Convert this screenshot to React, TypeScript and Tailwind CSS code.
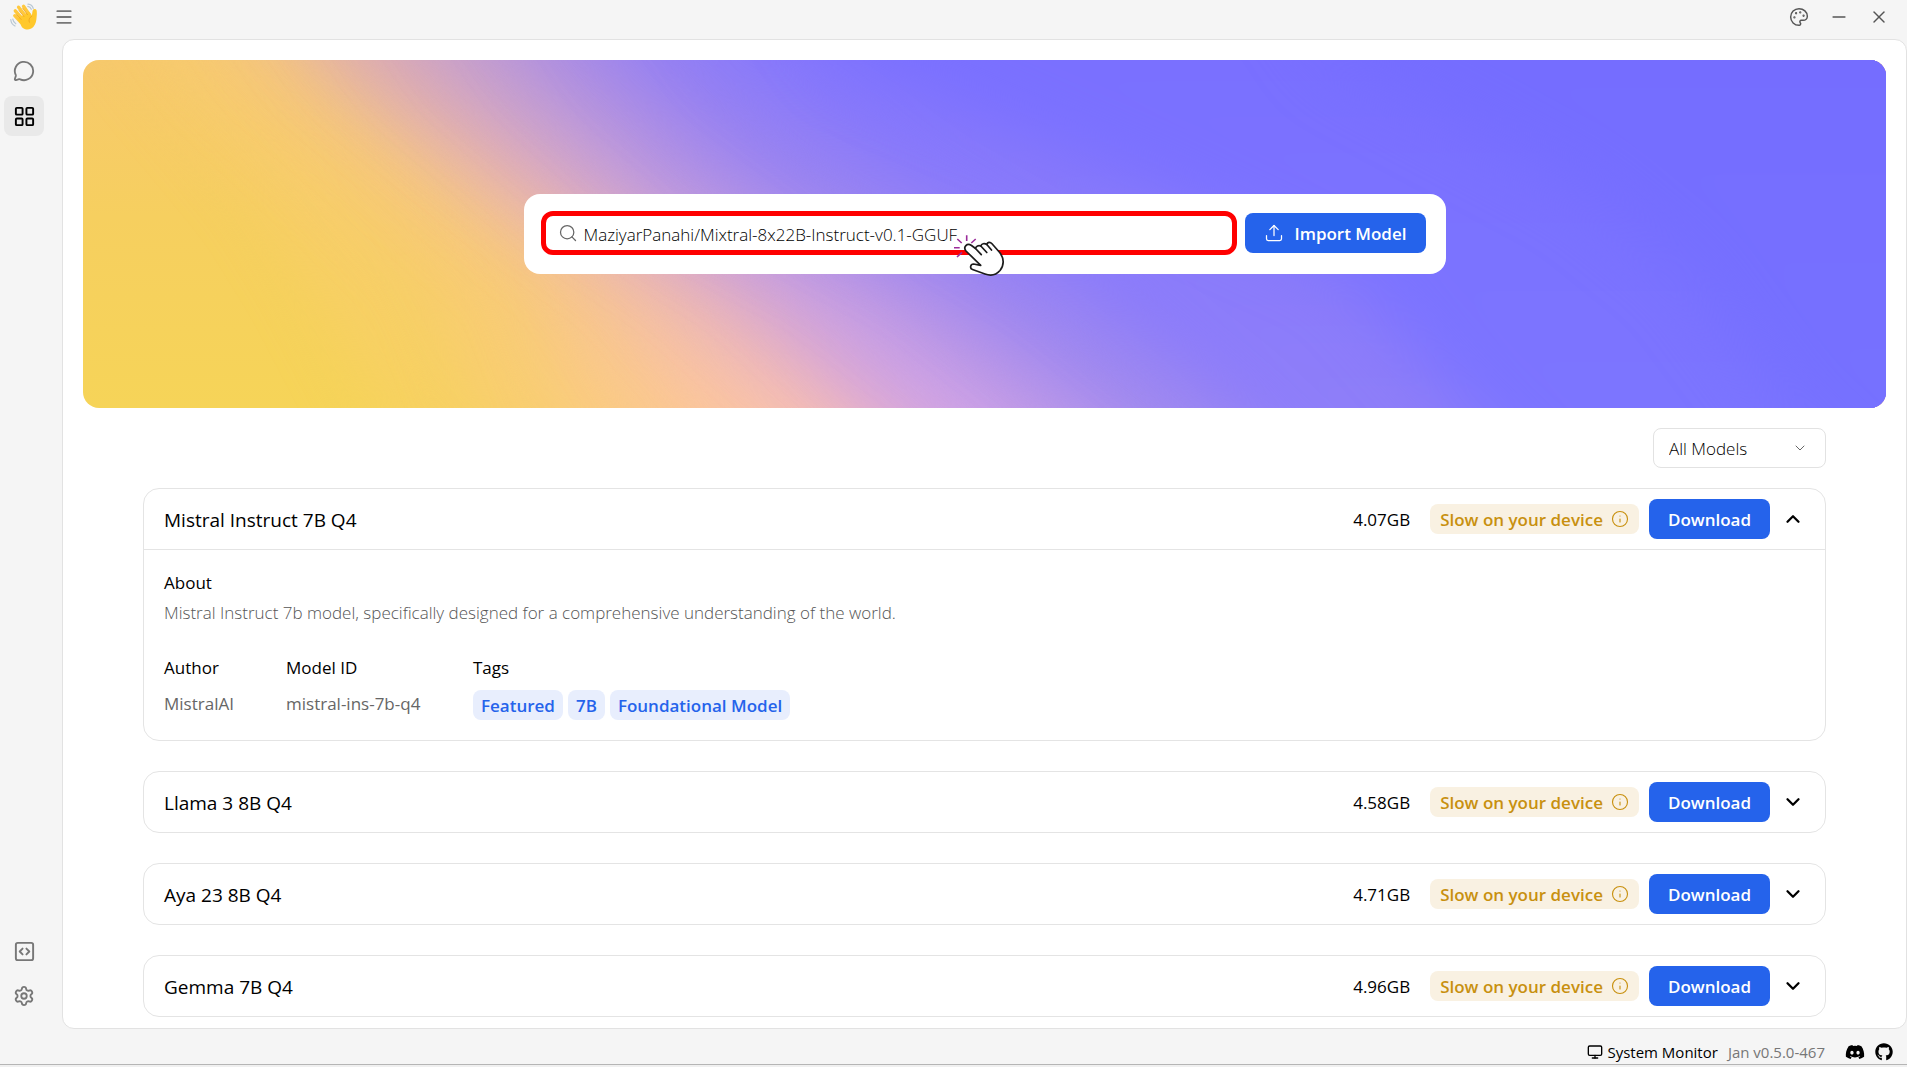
import React from "react";
import { ChevronDown, ChevronUp, Info, LayoutGrid, Menu, MessageCircle, Minus, Monitor, Palette, Search, Settings, SquareCode, Upload, X } from "lucide-react";
import { FaDiscord, FaGithub } from "react-icons/fa";

type Model = { name: string; size: string };

const models: Model[] = [
  { name: "Mistral Instruct 7B Q4", size: "4.07GB" },
  { name: "Llama 3 8B Q4", size: "4.58GB" },
  { name: "Aya 23 8B Q4", size: "4.71GB" },
  { name: "Gemma 7B Q4", size: "4.96GB" },
];

const tags = ["Featured", "7B", "Foundational Model"];

// Colour bands of the hero artwork: [top colour, bottom colour, left edge at y = 0, 133, 214, 348]
const bands: [string, string, number, number, number, number][] = [
  ["#f7cb6e", "#f7d162", 70, 180, 230, 300],
  ["#f6c778", "#f9ce72", 130, 270, 350, 400],
  ["#f0c08c", "#fbca88", 195, 350, 440, 490],
  ["#e6b6a2", "#fcc69e", 240, 400, 500, 580],
  ["#dcabb2", "#f6bfb4", 275, 440, 550, 665],
  ["#cda4c6", "#e2add0", 330, 485, 605, 755],
  ["#bd99d5", "#cfa3e6", 390, 545, 675, 815],
  ["#a88be6", "#b896e9", 460, 605, 755, 925],
  ["#927ff4", "#9f89f0", 545, 695, 845, 1020],
  ["#8577fc", "#8e7ef9", 650, 830, 970, 1140],
  ["#7a70ff", "#7c75ff", 760, 1080, 1260, 1380],
  ["#756dff", "#7671ff", 1250, 1500, 1600, 1700],
];

function HeroArt() {
  return (
    <svg className="absolute inset-0 h-full w-full" viewBox="0 0 1803 348" preserveAspectRatio="none" aria-hidden="true">
      <defs>
        <filter id="soft" x="-20%" y="-60%" width="140%" height="220%" colorInterpolationFilters="sRGB">
          <feGaussianBlur stdDeviation="30" />
        </filter>
        <linearGradient id="base" x1="0" y1="0" x2="0" y2="1">
          <stop offset="0" stopColor="#f7c96c" />
          <stop offset="0.45" stopColor="#f6cf5f" />
          <stop offset="1" stopColor="#f6d458" />
        </linearGradient>
        {bands.map(([top, bottom], i) => (
          <linearGradient key={i} id={`band${i}`} gradientUnits="userSpaceOnUse" x1="0" y1="0" x2="0" y2="348">
            <stop offset="0" stopColor={top} />
            <stop offset="1" stopColor={bottom} />
          </linearGradient>
        ))}
      </defs>
      <rect width="1803" height="348" fill="url(#base)" />
      {bands.map(([, , a, b, c, d], i) => (
        <path
          key={i}
          filter="url(#soft)"
          fill={`url(#band${i})`}
          d={`M${a - 80} -120L${a} 0L${b} 133L${c} 214L${d} 348L${d + 130} 470H2100V-120Z`}
        />
      ))}
    </svg>
  );
}

function WavingHand() {
  return (
    <svg width="28" height="28" viewBox="0 0 28 28" aria-hidden="true">
      <g fill="none" stroke="#b9c7d3" strokeWidth="1.2" strokeLinecap="round">
        <path d="M18 1.2c2.500.2 4.500 1.800 5.300 4.300M17.800 3.400c1.700.3 2.900 1.300 3.500 2.900" />
        <path d="M.8 16.500c.2 3 1.700 5.300 4.200 6.500M2.800 16.200c.3 2 1.300 3.600 3 4.600" />
      </g>
      <g stroke="#ffc83d" strokeLinecap="round" strokeWidth="3.400" fill="none">
        <path d="M4.800 12.700l6 6.300" />
        <path d="M5.300 7.800l8 9" />
        <path d="M8.600 4.200l8 10" />
        <path d="M13.500 3.300l6.500 9.500" />
      </g>
      <path fill="#ffc82c" d="M7.500 15.500L19 8.800c1.500 1.300 2.200 2.600 2.800 4.300.5-2.500.4-4.500 1.100-6 .8-1.600 3.500-1.400 3.800.7.3 2.500.2 4-.1 6.500-.3 3.500-.7 6.800-3.100 9.500-3.300 3.600-8.200 3.600-11.500.4z" />
      <path d="M6.600 11.700l4.600 4.800M9 7.600l5 6M12.700 5.300l4.800 6.400" fill="none" stroke="#eb9f1c" strokeWidth=".7" strokeLinecap="round" />
      <path d="M21.800 13.200c-2.500 1.300-3.400 3.700-2.400 6" fill="none" stroke="#eb9f1c" strokeWidth=".8" strokeLinecap="round" />
    </svg>
  );
}

function ClickPointer() {
  return (
    <svg className="pointer-events-none absolute left-[430px] top-[41px]" width="52" height="44" viewBox="0 0 52 44" aria-hidden="true">
      <path d="M12.700.3V6M17.300 8l4.400-4M3.300 4l4.400 4M0 12.700h5.700M3 22l5-4.700" stroke="#9b2c9b" strokeWidth="1.600" fill="none" />
      <g stroke="#1c1c1c" strokeWidth="1.700" strokeLinejoin="round" strokeLinecap="round">
        <path
          fill="#fff"
          d="M12 16L26.700 30.300L19.500 29C16.300 29 15.500 33.500 18.500 34.500L31 39C38 41.500 43 39 46 35.500C50.500 30 50 23 45.700 17.500L38 8.700C36 6.500 33.500 7 32.800 9.500C30.500 8 27.500 8.500 26.800 11C24.500 10 22 11 21.500 13.500L17.500 10.500C13 7.500 8.800 12 12 16Z"
        />
        <path fill="none" d="M21.500 13.500l5.800 6.200M26.800 11l6 6.500M32.800 9.500l4.700 5.500" />
      </g>
    </svg>
  );
}

function TitleBar() {
  return (
    <header className="flex h-[39px] shrink-0 items-center pl-2.5 pr-[18px] pb-1.5 text-[#555]">
      <WavingHand />
      <button type="button" aria-label="Toggle menu" className="ml-4 text-[#777]">
        <Menu size={20} strokeWidth={2.25} />
      </button>
      <div className="ml-auto flex items-center gap-5">
        <button type="button" aria-label="Theme"><Palette size={20} strokeWidth={1.75} /></button>
        <button type="button" aria-label="Minimize"><Minus size={20} strokeWidth={2} /></button>
        <button type="button" aria-label="Close"><X size={20} strokeWidth={1.75} /></button>
      </div>
    </header>
  );
}

function RailButton({ label, active, children }: { label: string; active?: boolean; children: React.ReactNode }) {
  return (
    <button
      type="button"
      aria-label={label}
      className={active ? "flex size-10 items-center justify-center rounded-lg bg-[#e9e9e9] text-black" : "flex size-10 items-center justify-center rounded-lg text-[#777]"}
    >
      {children}
    </button>
  );
}

function Rail() {
  return (
    <nav className="flex w-[62px] shrink-0 flex-col gap-[5px] px-1 pb-[13px] pt-3">
      <RailButton label="Threads"><MessageCircle size={22} strokeWidth={2} /></RailButton>
      <RailButton label="Hub" active><LayoutGrid size={23} strokeWidth={2} /></RailButton>
      <div className="mt-auto flex flex-col gap-[5px]">
        <RailButton label="Local API Server"><SquareCode size={23} strokeWidth={2} /></RailButton>
        <RailButton label="Settings"><Settings size={22} strokeWidth={2} /></RailButton>
      </div>
    </nav>
  );
}

function Hero() {
  return (
    <section className="relative flex h-[348px] items-center justify-center overflow-hidden rounded-2xl">
      <HeroArt />
      <form className="relative flex w-[922px] items-center gap-2 rounded-2xl bg-white pb-[19px] pl-[17px] pr-5 pt-[17px]" onSubmit={(e) => e.preventDefault()}>
        <label className="flex h-11 flex-1 items-center gap-1.5 rounded-xl border-5 border-[#ff0000] pl-3">
          <Search size={20} strokeWidth={1.5} className="text-[#666]" />
          <input
            type="text"
            aria-label="Search models"
            defaultValue="MaziyarPanahi/Mixtral-8x22B-Instruct-v0.1-GGUF"
            className="min-w-0 flex-1 bg-transparent pt-1 text-[17px] font-light leading-6 text-black outline-none"
          />
        </label>
        <button type="submit" className="flex h-10 items-center gap-2.5 rounded-lg bg-[#2563eb] px-[19px] text-[17px] font-semibold text-white">
          <Upload size={20} strokeWidth={1.5} />
          <span className="pt-0.5">Import Model</span>
        </button>
        <ClickPointer />
      </form>
    </section>
  );
}

function ModelHeader({ model, open }: { model: Model; open: boolean }) {
  return (
    <div className="flex h-15 items-center pl-5 pr-[21px]">
      <h2 className="pt-0.5 text-[19px] font-medium leading-7">{model.name}</h2>
      <div className="ml-auto flex items-center">
        <span className="mr-5 pt-0.5 text-[17px] leading-6">{model.size}</span>
        <span className="mr-2.5 flex h-[30px] items-center gap-2 rounded-lg bg-[#f9f1e2] px-2.5 text-[17px] font-semibold text-[#c8900f]">
          <span className="pt-0.5">Slow on your device</span>
          <Info size={18} strokeWidth={1.5} />
        </span>
        <button type="button" className="h-10 rounded-lg bg-[#2563eb] px-[19px] pt-0.5 text-[17px] font-semibold text-white">Download</button>
        <button type="button" aria-label={open ? "Collapse" : "Expand"} className="ml-3">
          {open ? <ChevronUp size={22} strokeWidth={2.5} /> : <ChevronDown size={22} strokeWidth={2.5} />}
        </button>
      </div>
    </div>
  );
}

function ModelDetails() {
  return (
    <div className="border-t border-[#e4e4e4] px-5 pb-5 pt-[21px] text-[17px] leading-6">
      <h3 className="font-medium">About</h3>
      <p className="mt-1.5 font-light text-[#555]">
        Mistral Instruct 7b model, specifically designed for a comprehensive understanding of the world.
      </p>
      <dl className="mt-[31px] flex">
        <div className="w-[122px]">
          <dt className="font-medium">Author</dt>
          <dd className="mt-3 text-[#666]">MistralAI</dd>
        </div>
        <div className="w-[187px]">
          <dt className="font-medium">Model ID</dt>
          <dd className="mt-3 text-[#666]">mistral-ins-7b-q4</dd>
        </div>
        <div>
          <dt className="font-medium">Tags</dt>
          <dd className="mt-2.5 flex gap-[5px]">
            {tags.map((tag) => (
              <span key={tag} className="flex h-[30px] items-center rounded-lg bg-[#e8eefd] px-2 pt-0.5 font-semibold text-[#2563eb]">{tag}</span>
            ))}
          </dd>
        </div>
      </dl>
    </div>
  );
}

function StatusBar() {
  return (
    <footer className="flex h-[35px] shrink-0 items-center justify-end pr-3.5 pt-2.5 text-[15px] leading-5">
      <button type="button" className="flex items-center gap-1">
        <Monitor size={16} strokeWidth={2} />
        System Monitor
      </button>
      <span className="ml-2.5 text-[#777]">Jan v0.5.0-467</span>
      <a href="#discord" aria-label="Discord" className="ml-5"><FaDiscord size={20} /></a>
      <a href="#github" aria-label="GitHub" className="ml-2.5"><FaGithub size={18} /></a>
    </footer>
  );
}

export default function App() {
  return (
    <div className="flex h-screen flex-col bg-[#f5f5f5] font-['Open_Sans','Noto_Sans',sans-serif] text-black">
      <TitleBar />
      <div className="flex min-h-0 flex-1">
        <Rail />
        <main className="min-w-0 flex-1 overflow-hidden rounded-xl border border-[#e2e2e2] bg-white p-5">
          <Hero />
          <div className="px-15 pt-5">
            <div className="relative ml-auto w-[173px]">
              <select aria-label="Filter models" className="h-10 w-full appearance-none rounded-lg border border-[#e2e2e2] bg-white px-[15px] pt-0.5 text-[17px] font-light">
                <option>All Models</option>
              </select>
              <ChevronDown size={16} strokeWidth={1.5} className="pointer-events-none absolute right-[18px] top-3 text-[#666]" />
            </div>
            <div className="mt-5 flex flex-col gap-[30px]">
              {models.map((model, i) => (
                <article key={model.name} className="rounded-2xl border border-[#e4e4e4]">
                  <ModelHeader model={model} open={i === 0} />
                  {i === 0 && <ModelDetails />}
                </article>
              ))}
            </div>
          </div>
        </main>
      </div>
      <StatusBar />
      <div className="h-[3px] shrink-0 border-t border-[#b5b5b5] bg-[#f0f0f0]" />
    </div>
  );
}
